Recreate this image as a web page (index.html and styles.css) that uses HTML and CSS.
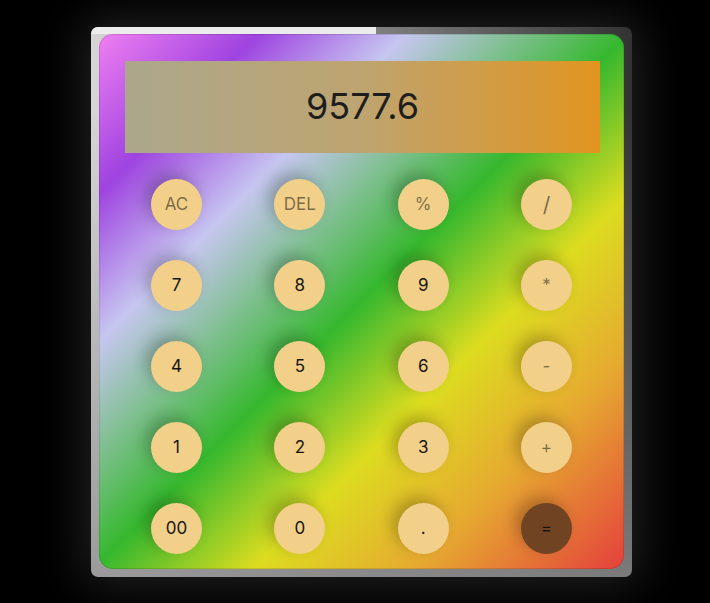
FILE: index.html
```html
<!DOCTYPE html>
<html lang="en">
<head>
<meta charset="utf-8">
<title>Calculator</title>
<link rel="stylesheet" href="styles.css">
</head>
<body>
<div class="frame">
  <div class="panel">
    <div class="display">9577.6</div>
    <div class="keys">
      <button class="key op">AC</button>
      <button class="key op">DEL</button>
      <button class="key op">%</button>
      <button class="key op slash">/</button>
      <button class="key">7</button>
      <button class="key">8</button>
      <button class="key">9</button>
      <button class="key op">*</button>
      <button class="key">4</button>
      <button class="key">5</button>
      <button class="key">6</button>
      <button class="key op">-</button>
      <button class="key">1</button>
      <button class="key">2</button>
      <button class="key">3</button>
      <button class="key op">+</button>
      <button class="key">00</button>
      <button class="key">0</button>
      <button class="key">.</button>
      <button class="key equal">=</button>
    </div>
  </div>
</div>
</body>
</html>
```
FILE: styles.css
```css
html, body {
  margin: 0;
  background: #000;
}
body {
  padding: 27px 0 0 91px;
  height: 603px;
  box-sizing: border-box;
  font-family: Inter, "Open Sans", sans-serif;
}
.frame {
  position: relative;
  width: 541px;
  height: 550px;
  box-sizing: border-box;
  padding: 7px 8px 8px 8px;
  border-radius: 7px;
  background:
    linear-gradient(to bottom, rgba(140,140,140,0) 0%, rgba(140,140,140,0) 15%, rgba(140,140,140,0.8) 100%),
    linear-gradient(to right, #d6d6d6, #333);
  box-shadow: 0 0 45px 8px rgba(255,255,255,0.13);
}
.frame::before {
  content: "";
  position: absolute;
  top: 0;
  left: 0;
  width: 285px;
  height: 7px;
  background: #ececec;
  border-top-left-radius: 7px;
}
.panel {
  position: relative;
  height: 100%;
  border-radius: 14px;
  background: linear-gradient(135deg, #f07ff2 0%, #9f44e0 15%, #c6c6f0 29%, #36b82e 50%, #dcdc20 65%, #e6aa30 80%, #e4403c 100%);
  box-shadow: inset 0 0 0 1px rgba(0,0,0,0.12);
  padding-top: 27px;
  box-sizing: border-box;
}
.display {
  width: 475px;
  height: 92px;
  margin-left: 26px;
  display: flex;
  align-items: center;
  justify-content: center;
  background: linear-gradient(to right, #aba78c, #bea46f 50%, #e29420);
  color: #1e1e1e;
  font-size: 36px;
  padding-bottom: 2px;
  box-sizing: border-box;
}
.keys {
  display: grid;
  grid-template-columns: repeat(4, 51px);
  grid-auto-rows: 51px;
  column-gap: 72.33px;
  row-gap: 30px;
  justify-content: center;
  margin-top: 25.5px;
}
.key {
  width: 51px;
  height: 51px;
  border: none;
  border-radius: 50%;
  background: #f2d08a;
  color: #151515;
  font-family: inherit;
  font-size: 17px;
  padding: 0;
  box-shadow: -6px -6px 15px rgba(0,0,0,0.24);
}
.op {
  color: rgba(0,0,0,0.5);
}
.slash {
  font-size: 21px;
}
.equal {
  background: #704422;
  color: #151515;
}
```
